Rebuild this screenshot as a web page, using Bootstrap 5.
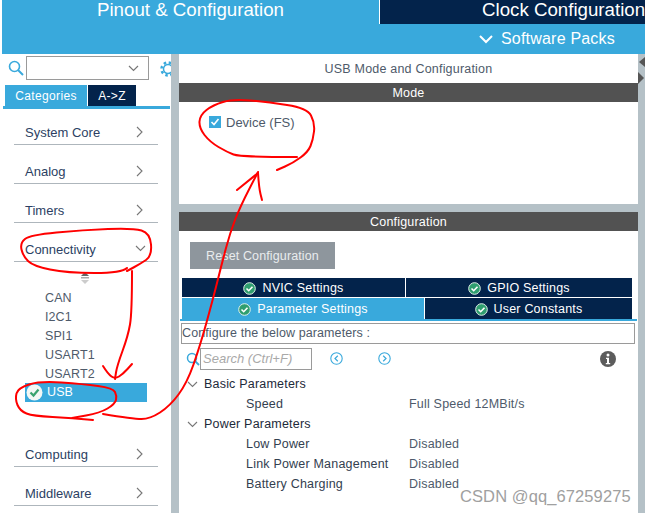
<!DOCTYPE html>
<html lang="en">
  <head>
    <meta charset="UTF-8" />
    <title>USB Mode and Configuration</title>
    <link
      href="https://cdn.jsdelivr.net/npm/bootstrap@5.3.0/dist/css/bootstrap.min.css"
      rel="stylesheet"
    />
    <style>
      body {
        margin: 0;
        background: #fff;
        font-family: "Liberation Sans", Arial, sans-serif;
        font-size: 13px;
        overflow: hidden;
      }
      .app-frame {
        position: relative;
        width: 645px;
        height: 513px;
        overflow: hidden;
      }

      /* top bar */
      .top-bar {
        margin-left: 2px;
        height: 54px;
        background: #39a9dc;
        color: #fff;
      }
      .top-tabs {
        height: 24px;
        font-size: 18.7px;
        line-height: 19px;
        white-space: nowrap;
      }
      .top-tab-pinout {
        width: 377px;
        padding-left: 95px;
      }
      .top-tab-clock {
        flex: 1;
        overflow: hidden;
        padding-left: 102px;
        background: #03234b;
        border-left: 1px solid #fff;
      }
      .packs-row {
        height: 30px;
        padding-left: 477px;
        font-size: 16px;
        letter-spacing: 0.2px;
      }

      /* left side */
      .side-panel {
        width: 169px;
        margin-left: 2px;
        overflow: hidden;
        flex: none;
      }
      .side-search {
        height: 31px;
        padding: 2px 0 0 6px;
      }
      .combo-box {
        width: 123px;
        height: 24px;
        margin-left: 1px;
        border: 1px solid #9a9a9a;
        padding-right: 9px;
        flex: none;
      }
      .gear-icon {
        margin: 5px 0 0 11px;
        flex: none;
      }
      .side-tabs {
        height: 21px;
        margin-left: 3px;
        font-size: 12px;
        letter-spacing: 0.35px;
        color: #fff;
      }
      .side-tab-cat {
        width: 82px;
        background: #39a9dc;
      }
      .side-tab-az {
        width: 48px;
        margin-left: 1px;
        background: #03234b;
      }
      .side-line {
        height: 3px;
        width: 167px;
        margin-left: 1px;
        background: #39a9dc;
      }
      .cat-row {
        width: 144px;
        height: 29px;
        margin: 10px 0 0 12px;
        padding: 3px 15px 0 11px;
        border-bottom: 1px solid #aeb6bc;
        color: #2c3f63;
      }
      .cat-row span {
        padding-top: 2px;
      }
      .cat-row-first {
        margin-top: 7px;
      }
      .cat-row-open {
        padding-right: 12px;
      }
      .sub-list {
        padding: 0 0 26px 23px;
        color: #4e5a6a;
        font-size: 12.5px;
      }
      .sub-arrow {
        height: 26px;
        padding: 10px 0 0 55px;
      }
      .sub-item {
        height: 19px;
        line-height: 21px;
        padding-left: 20px;
        width: 122px;
        letter-spacing: 0.1px;
      }
      .sub-item-on {
        padding-left: 1px;
        line-height: 19px;
        background: #39a9dc;
        color: #fff;
      }

      /* splitters */
      .split-bar {
        width: 8px;
        flex: none;
        background: #b5c1c7;
      }
      .split-end {
        width: 7px;
        flex: none;
        background: #b5c1c7;
      }
      .split-row {
        height: 8px;
        background: #b5c1c7;
      }

      /* right side */
      .mode-panel {
        width: 459px;
        flex: none;
      }
      .panel-title {
        height: 29px;
        padding-top: 2px;
        color: #4e5a6a;
        letter-spacing: 0.2px;
        font-size: 12.5px;
      }
      .dark-bar {
        height: 19px;
        padding-top: 1px;
        background: #525252;
        color: #fff;
        font-size: 12.5px;
        letter-spacing: 0.2px;
      }
      .mode-body {
        height: 102px;
        padding: 14px 0 0 30px;
        color: #4e5a6a;
        gap: 5px;
      }
      .tick-box {
        width: 12px;
        height: 12px;
        background: #39a9dc;
      }
      .reset-btn {
        width: 145px;
        height: 27px;
        margin: 11px 0 0 11px;
        padding-top: 1px;
        background: #8e969d;
        color: #e9ecee;
        letter-spacing: 0.12px;
        font-size: 12.5px;
      }
      .tab-rows {
        margin: 9px 0 0 3px;
        width: 450px;
        color: #fff;
        letter-spacing: 0.2px;
        font-size: 12.5px;
      }
      .tab-cell {
        height: 19px;
        padding-top: 1px;
        gap: 6px;
        background: #03234b;
      }
      .tab-cell-tall {
        height: 21px;
      }
      .tab-on {
        background: #39a9dc;
      }
      .tab-gap {
        height: 1px;
      }
      .tab-line {
        width: 457px;
        height: 2px;
        margin-left: 1px;
        background: #39a9dc;
      }
      .hint-box {
        width: 454px;
        height: 21px;
        margin: 2px 0 0 2px;
        border: 1px solid #9a9a9a;
        color: #4e5a6a;
        letter-spacing: 0.1px;
        font-size: 12.5px;
      }
      .find-row {
        height: 30px;
        padding: 4px 0 0 7px;
      }
      .find-input {
        width: 112px;
        height: 22px;
        border: 1px solid #9a9a9a;
        padding-left: 2px;
        color: #a9a9a9;
        font-style: italic;
      }
      .tree-row {
        height: 20px;
        letter-spacing: 0.2px;
        font-size: 12.5px;
      }
      .tree-head {
        padding-left: 8px;
        gap: 2px;
        color: #1d2a3a;
      }
      .tree-leaf {
        padding-left: 67px;
        color: #33404f;
      }
      .tree-name {
        width: 163px;
        flex: none;
      }
      .tree-val {
        color: #4e5a6a;
      }
      .water-mark {
        position: absolute;
        left: 460px;
        top: 486px;
        font-size: 16.5px;
        line-height: 20px;
        letter-spacing: 0.1px;
        color: #a0a0a0;
      }
      .red-ink {
        position: absolute;
        left: 0;
        top: 0;
      }
      .red-ink path {
        fill: none;
        stroke: #f00;
        stroke-width: 2;
        stroke-linecap: round;
        stroke-linejoin: round;
      }
    </style>
  </head>

  <body>
    <div class="app-frame d-flex flex-column">
      <div class="top-bar flex-none">
        <div class="top-tabs d-flex">
          <div class="top-tab-pinout">Pinout &amp; Configuration</div>
          <div class="top-tab-clock">Clock Configuration</div>
        </div>
        <div class="packs-row d-flex align-items-center gap-2">
          <svg width="14" height="14" viewBox="0 0 14 14">
            <path d="M1 4l6 6 6-6" fill="none" stroke="#fff" stroke-width="2" />
          </svg>
          <span>Software Packs</span>
        </div>
      </div>

      <div class="d-flex flex-grow-1">
        <div class="side-panel">
          <div class="side-search d-flex align-items-start">
            <svg class="mt-1 flex-shrink-0" width="17" height="17" viewBox="0 0 17 17">
              <circle cx="6.5" cy="6.5" r="5" fill="none" stroke="#39a9dc" stroke-width="1.6" />
              <path d="M10 10l5 5" stroke="#39a9dc" stroke-width="2" />
            </svg>
            <div class="combo-box d-flex align-items-center justify-content-end">
              <svg width="11" height="7" viewBox="0 0 11 7">
                <path d="M1 1l4.500 4.500L10 1" fill="none" stroke="#777" stroke-width="1.200" />
              </svg>
            </div>
            <svg class="gear-icon" width="16" height="16" viewBox="0 0 16 16">
              <circle cx="8" cy="8" r="4.500" fill="none" stroke="#39a9dc" stroke-width="1.500" />
              <circle cx="8" cy="8" r="6.500" fill="none" stroke="#39a9dc" stroke-width="2.500" stroke-dasharray="2.500 2.600" />
            </svg>
          </div>
          <div class="side-tabs d-flex">
            <div class="side-tab-cat d-flex align-items-center justify-content-center">Categories</div>
            <div class="side-tab-az d-flex align-items-center justify-content-center">A-&gt;Z</div>
          </div>
          <div class="side-line"></div>

          <div class="cat-row cat-row-first d-flex align-items-center justify-content-between">
            <span>System Core</span>
            <svg width="7" height="12" viewBox="0 0 7 12"><path d="M1 1l5 5-5 5" fill="none" stroke="#777" stroke-width="1.100" /></svg>
          </div>
          <div class="cat-row d-flex align-items-center justify-content-between">
            <span>Analog</span>
            <svg width="7" height="12" viewBox="0 0 7 12"><path d="M1 1l5 5-5 5" fill="none" stroke="#777" stroke-width="1.100" /></svg>
          </div>
          <div class="cat-row d-flex align-items-center justify-content-between">
            <span>Timers</span>
            <svg width="7" height="12" viewBox="0 0 7 12"><path d="M1 1l5 5-5 5" fill="none" stroke="#777" stroke-width="1.100" /></svg>
          </div>
          <div class="cat-row cat-row-open d-flex align-items-center justify-content-between">
            <span>Connectivity</span>
            <svg width="11" height="7" viewBox="0 0 11 7"><path d="M1 1l4.500 4.500L10 1" fill="none" stroke="#777" stroke-width="1.100" /></svg>
          </div>

          <div class="sub-list">
            <div class="sub-arrow">
              <svg class="d-block" width="10" height="12" viewBox="0 0 10 12">
                <path d="M5 0l4 4H1z" fill="#666" />
                <path d="M1 5h8v1.500H1z" fill="#aaa" />
                <path d="M5 12L1 8h8z" fill="#ccc" />
              </svg>
            </div>
            <div class="sub-item">CAN</div>
            <div class="sub-item">I2C1</div>
            <div class="sub-item">SPI1</div>
            <div class="sub-item">USART1</div>
            <div class="sub-item">USART2</div>
            <div class="sub-item sub-item-on d-flex align-items-center gap-1">
              <svg width="17" height="17" viewBox="0 0 17 17">
                <circle cx="8.500" cy="8.500" r="8" fill="#f3f8f5" />
                <path d="M4.500 8.500l3 3 5-6" fill="none" stroke="#3aa36f" stroke-width="2.200" />
              </svg>
              <span>USB</span>
            </div>
          </div>

          <div class="cat-row d-flex align-items-center justify-content-between">
            <span>Computing</span>
            <svg width="7" height="12" viewBox="0 0 7 12"><path d="M1 1l5 5-5 5" fill="none" stroke="#777" stroke-width="1.100" /></svg>
          </div>
          <div class="cat-row d-flex align-items-center justify-content-between">
            <span>Middleware</span>
            <svg width="7" height="12" viewBox="0 0 7 12"><path d="M1 1l5 5-5 5" fill="none" stroke="#777" stroke-width="1.100" /></svg>
          </div>
        </div>

        <div class="split-bar"></div>

        <div class="mode-panel">
          <div class="panel-title d-flex align-items-center justify-content-center">USB Mode and Configuration</div>
          <div class="dark-bar d-flex align-items-center justify-content-center">Mode</div>
          <div class="mode-body d-flex align-items-start">
            <div class="tick-box d-flex align-items-center justify-content-center">
              <svg width="10" height="10" viewBox="0 0 10 10">
                <path d="M1.500 5l2.500 2.500L8.500 2" fill="none" stroke="#fff" stroke-width="1.600" />
              </svg>
            </div>
            <span class="lh-1">Device (FS)</span>
          </div>
          <div class="split-row"></div>
          <div class="dark-bar d-flex align-items-center justify-content-center">Configuration</div>
          <div class="reset-btn d-flex align-items-center justify-content-center">Reset Configuration</div>

          <div class="tab-rows">
            <div class="d-flex">
              <div class="tab-cell d-flex align-items-center justify-content-center" style="width: 223px">
                <svg width="13" height="13" viewBox="0 0 13 13">
                  <circle cx="6.500" cy="6.500" r="5.800" fill="#2f9e6f" stroke="#dff0e8" stroke-width="1" />
                  <path d="M3.500 6.500l2.200 2.200 3.800-4" fill="none" stroke="#fff" stroke-width="1.600" />
                </svg>
                <span>NVIC Settings</span>
              </div>
              <div class="tab-cell d-flex align-items-center justify-content-center flex-grow-1" style="margin-left: 1px">
                <svg width="13" height="13" viewBox="0 0 13 13">
                  <circle cx="6.500" cy="6.500" r="5.800" fill="#2f9e6f" stroke="#dff0e8" stroke-width="1" />
                  <path d="M3.500 6.500l2.200 2.200 3.800-4" fill="none" stroke="#fff" stroke-width="1.600" />
                </svg>
                <span>GPIO Settings</span>
              </div>
            </div>
            <div class="tab-gap"></div>
            <div class="d-flex">
              <div class="tab-cell tab-cell-tall tab-on d-flex align-items-center justify-content-center" style="width: 242px">
                <svg width="13" height="13" viewBox="0 0 13 13">
                  <circle cx="6.500" cy="6.500" r="5.800" fill="#2f9e6f" stroke="#dff0e8" stroke-width="1" />
                  <path d="M3.500 6.500l2.200 2.200 3.800-4" fill="none" stroke="#fff" stroke-width="1.600" />
                </svg>
                <span>Parameter Settings</span>
              </div>
              <div class="tab-cell tab-cell-tall d-flex align-items-center justify-content-center flex-grow-1" style="margin-left: 1px">
                <svg width="13" height="13" viewBox="0 0 13 13">
                  <circle cx="6.500" cy="6.500" r="5.800" fill="#2f9e6f" stroke="#dff0e8" stroke-width="1" />
                  <path d="M3.500 6.500l2.200 2.200 3.800-4" fill="none" stroke="#fff" stroke-width="1.600" />
                </svg>
                <span>User Constants</span>
              </div>
            </div>
          </div>
          <div class="tab-line"></div>
          <div class="hint-box d-flex align-items-center">Configure the below parameters :</div>

          <div class="find-row d-flex align-items-start">
            <svg class="mt-1 flex-shrink-0" width="14" height="14" viewBox="0 0 14 14">
              <circle cx="6" cy="6" r="4.500" fill="none" stroke="#39a9dc" stroke-width="1.500" />
              <path d="M9 9l4 4" stroke="#39a9dc" stroke-width="1.800" />
            </svg>
            <div class="find-input d-flex align-items-center">Search (Ctrl+F)</div>
            <svg class="mt-1 flex-shrink-0" style="margin-left: 18px" width="13" height="13" viewBox="0 0 13 13">
              <circle cx="6.500" cy="6.500" r="5.700" fill="none" stroke="#39a9dc" stroke-width="1.100" />
              <path d="M7.800 3.800L5 6.500l2.800 2.700" fill="none" stroke="#39a9dc" stroke-width="1.200" />
            </svg>
            <svg class="mt-1 flex-shrink-0" style="margin-left: 35px" width="13" height="13" viewBox="0 0 13 13">
              <circle cx="6.500" cy="6.500" r="5.700" fill="none" stroke="#39a9dc" stroke-width="1.100" />
              <path d="M5.200 3.800L8 6.500l-2.800 2.700" fill="none" stroke="#39a9dc" stroke-width="1.200" />
            </svg>
            <svg class="flex-shrink-0" style="margin: 3px 0 0 209px" width="16" height="16" viewBox="0 0 16 16">
              <circle cx="8" cy="8" r="8" fill="#5c5c5c" />
              <circle cx="8" cy="4" r="1.500" fill="#fff" />
              <path d="M6 6.800h3v5.200h1.200v1.300H5.800V12H7V8H6z" fill="#fff" />
            </svg>
          </div>

          <div class="tree-row tree-head d-flex align-items-center">
            <svg width="11" height="7" viewBox="0 0 11 7"><path d="M1 1l4.500 4.500L10 1" fill="none" stroke="#777" stroke-width="1.100" /></svg>
            <span class="ms-1">Basic Parameters</span>
          </div>
          <div class="tree-row tree-leaf d-flex align-items-center">
            <span class="tree-name">Speed</span>
            <span class="tree-val">Full Speed 12MBit/s</span>
          </div>
          <div class="tree-row tree-head d-flex align-items-center">
            <svg width="11" height="7" viewBox="0 0 11 7"><path d="M1 1l4.500 4.500L10 1" fill="none" stroke="#777" stroke-width="1.100" /></svg>
            <span class="ms-1">Power Parameters</span>
          </div>
          <div class="tree-row tree-leaf d-flex align-items-center">
            <span class="tree-name">Low Power</span>
            <span class="tree-val">Disabled</span>
          </div>
          <div class="tree-row tree-leaf d-flex align-items-center">
            <span class="tree-name">Link Power Management</span>
            <span class="tree-val">Disabled</span>
          </div>
          <div class="tree-row tree-leaf d-flex align-items-center">
            <span class="tree-name">Battery Charging</span>
            <span class="tree-val">Disabled</span>
          </div>
        </div>

        <div class="split-end">
          <svg class="d-block" style="margin-top: 3px" width="7" height="30" viewBox="0 0 7 30">
            <path d="M7 0v10L1 5z" fill="#555" />
            <path d="M0 15v12l6-6z" fill="#555" />
          </svg>
        </div>
      </div>

      <div class="water-mark">CSDN @qq_67259275</div>

      <!-- the hand drawn red marks -->
      <svg class="red-ink" id="redInk" width="645" height="513" viewBox="0 0 645 513"></svg>
    </div>

    <script src="https://cdn.jsdelivr.net/npm/bootstrap@5.3.0/dist/js/bootstrap.bundle.min.js"></script>
    <script>
      const strokes = [
        // around Device (FS)
        [[297,157],[240,157],[227,152],[210,142],[199,128],[200,115],[213,105],[233,99],[267,102],[307,108],[315,123],[313,140],[308,152],[293,163],[277,170]],
        // long arrow up to the checkbox
        [[103,414],[133,419],[150,419],[170,406],[187,383],[200,346],[213,299],[222,263],[230,233],[240,207],[258,172]],
        [[237,190],[258,173]],
        [[258,173],[259,188],[262,200]],
        // around Connectivity
        [[127,268],[122,273],[67,273],[33,266],[23,256],[20,243],[30,235],[83,230],[133,228],[150,233],[152,256],[140,264],[127,271]],
        // arrow down to USB
        [[132,271],[132,313],[128,336],[117,366],[115,379]],
        [[103,366],[108,374],[115,379],[123,374],[132,364]],
        // around USB
        [[93,420],[72,418],[33,416],[20,411],[15,399],[18,388],[40,381],[83,384],[113,388],[117,396],[115,404],[100,413],[72,418]],
      ];

      function smoothPath(points) {
        let d = `M${points[0][0]} ${points[0][1]}`;
        for (let i = 1; i < points.length - 1; i++) {
          const midX = (points[i][0] + points[i + 1][0]) / 2;
          const midY = (points[i][1] + points[i + 1][1]) / 2;
          d += `Q${points[i][0]} ${points[i][1]} ${midX} ${midY}`;
        }
        const last = points[points.length - 1];
        return d + `L${last[0]} ${last[1]}`;
      }

      const redInk = document.getElementById('redInk');
      redInk.innerHTML = strokes.map((s) => `<path d="${smoothPath(s)}" />`).join('');
    </script>
  </body>
</html>
